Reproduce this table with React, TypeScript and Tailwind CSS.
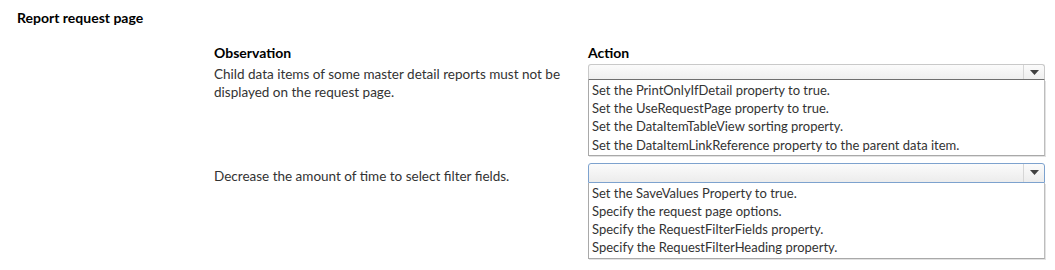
import { useState } from 'react'

interface Question {
  observation: string[]
  options: string[]
  focused?: boolean
}

const questions: Question[] = [
  {
    observation: [
      'Child data items of some master detail reports must not be',
      'displayed on the request page.',
    ],
    options: [
      'Set the PrintOnlyIfDetail property to true.',
      'Set the UseRequestPage property to true.',
      'Set the DataItemTableView sorting property.',
      'Set the DataItemLinkReference property to the parent data item.',
    ],
  },
  {
    observation: ['Decrease the amount of time to select filter fields.'],
    options: [
      'Set the SaveValues Property to true.',
      'Specify the request page options.',
      'Specify the RequestFilterFields property.',
      'Specify the RequestFilterHeading property.',
    ],
    focused: true,
  },
]

function DropList({ options, focused }: { options: string[]; focused?: boolean }) {
  const [value] = useState('')

  return (
    <div className="w-[457px]">
      {/* Closed combo box */}
      <div
        className={
          focused
            ? 'flex h-[20px] items-stretch rounded-t-[3px] border border-[#7da2ce] bg-gradient-to-b from-[#fbfbfb] to-[#ececec]'
            : 'flex h-[16px] items-stretch rounded-t-[3px] border border-[#c9c9c9] border-b-[#6f6f6f] bg-gradient-to-b from-[#fbfbfb] to-[#efefef]'
        }
      >
        <div className="flex-1 text-[13px]">{value}</div>
        <div className="flex w-[21px] items-center justify-center border-l border-[#d6d6d6]">
          <svg width="9" height="5" viewBox="0 0 9 5">
            <path d="M0 0h9L4.5 5z" fill="#404040" />
          </svg>
        </div>
      </div>

      {/* Open option list */}
      <div className="border border-t-0 border-[#a9a9a9] border-r-[#bdbdbd] bg-white py-[1px] pl-[3px] shadow-[1px_1px_0_#e2e2e2]">
        {options.map((option) => (
          <div key={option} className="h-[18.2px] text-[13px] leading-[18.2px] text-[#333]">
            {option}
          </div>
        ))}
      </div>
    </div>
  )
}

export default function App() {
  return (
    <div
      className="h-[270px] w-[1055px] bg-white text-[#333]"
      style={{ fontFamily: '"Lato", "Open Sans", sans-serif' }}
    >
      <div className="px-[17px] pt-[10px] text-[14px] font-bold leading-[16px] text-black">
        Report request page
      </div>

      <div className="ml-[214px] mt-[18px] grid grid-cols-[374px_457px]">
        <div className="pb-[2px] text-[14px] font-bold leading-[18px] text-black">Observation</div>
        <div className="pb-[2px] text-[14px] font-bold leading-[18px] text-black">Action</div>

        {questions.map((q, i) => (
          <div key={i} className="contents">
            <div className={i === 0 ? 'pt-[1px] text-[13.5px] leading-[18px]' : 'pt-[11px] text-[13.5px] leading-[18px]'}>
              {q.observation.map((line) => (
                <div key={line}>{line}</div>
              ))}
            </div>
            <div className={i === 0 ? 'pt-[0px]' : 'pt-[7px]'}>
              <DropList options={q.options} focused={q.focused} />
            </div>
          </div>
        ))}
      </div>
    </div>
  )
}
